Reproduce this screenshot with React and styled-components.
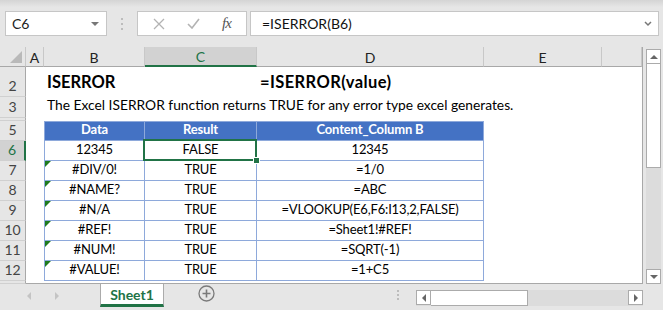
import React from "react";
import styled, { createGlobalStyle, css } from "styled-components";

const GlobalStyle = createGlobalStyle`
  html, body { margin: 0; padding: 0; background: #e6e6e6; }
  body { font-family: Lato, "Open Sans", sans-serif; }
`;

const Window = styled.div`
  width: 663px;
  height: 310px;
  overflow: hidden;
  background: linear-gradient(#d4d4d4 0, #e6e6e6 7px, #e6e6e6 100%);
  display: flex;
  flex-direction: column;
`;

const FormulaRow = styled.div`
  display: flex;
  height: 25px;
  margin-top: 11px;
  padding: 0 4px 0 5px;
`;

const NameBox = styled.div`
  width: 102px;
  box-sizing: border-box;
  background: #fff;
  border: 1px solid #c6c6c6;
  display: flex;
  align-items: center;
  justify-content: space-between;
  padding: 0 7px 0 6px;
  font-size: 14px;
  color: #222;
`;

const DownTri = styled.span`
  width: 0;
  height: 0;
  border-left: 4px solid transparent;
  border-right: 4px solid transparent;
  border-top: 4px solid #777;
`;

const Dots = styled.div`
  width: ${(p) => p.$w || 30}px;
  height: ${(p) => (p.$h ? `${p.$h}px` : "auto")};
  margin-left: ${(p) => p.$ml || 0}px;
  display: flex;
  flex-direction: column;
  align-items: center;
  justify-content: center;
  gap: ${(p) => p.$gap || 3}px;
  span {
    width: 2px;
    height: 2px;
    background: #bcbcbc;
  }
`;

const FxBox = styled.div`
  width: 110px;
  box-sizing: border-box;
  background: #fff;
  border: 1px solid #c6c6c6;
  display: flex;
  align-items: center;
  justify-content: space-around;
  padding: 0 4px;
`;

const Fx = styled.span`
  font-family: "Liberation Serif", serif;
  font-style: italic;
  font-size: 15px;
  color: #555;
  letter-spacing: -1px;
`;

const FormulaInput = styled.div`
  flex: 1;
  margin-left: 3px;
  box-sizing: border-box;
  background: #fff;
  border: 1px solid #c6c6c6;
  display: flex;
  align-items: center;
  justify-content: space-between;
  padding: 0 6px 0 11px;
  font-size: 14px;
  color: #111;
`;

const Body = styled.div`
  display: flex;
  margin-top: 11px;
  height: 237px;
`;

const Sheet = styled.div`
  display: grid;
  grid-template-columns: 26px 18px 101px 112px 227px 118px 40px;
  grid-template-rows: 20px 30px 21px 3px repeat(8, 20px) 2px;
  width: 643px;
  box-sizing: border-box;
  background: #fff;
  border-right: 1px solid #a8a8a8;
  border-bottom: 1px solid #a8a8a8;
  font-size: 13px;
  letter-spacing: -0.15px;
  color: #000;
`;

const Corner = styled.div`
  background: #e6e6e6;
  border-right: 1px solid #c8c8c8;
  border-bottom: 1px solid #a8a8a8;
  position: relative;
  &::after {
    content: "";
    position: absolute;
    right: 3px;
    bottom: 3px;
    border-left: 12px solid transparent;
    border-bottom: 12px solid #b9b9b9;
  }
`;

const ColHead = styled.div`
  background: ${(p) => (p.$active ? "#d2d2d2" : "#e6e6e6")};
  border-right: 1px solid #c8c8c8;
  border-bottom: ${(p) => (p.$active ? "2px solid #217346" : "1px solid #a8a8a8")};
  display: flex;
  align-items: center;
  justify-content: center;
  font-size: 14px;
  letter-spacing: 0;
  color: ${(p) => (p.$active ? "#217346" : "#222")};
  padding-top: 1px;
  box-sizing: border-box;
`;

const RowHead = styled.div`
  background: ${(p) => (p.$active ? "#d2d2d2" : "#e6e6e6")};
  border-right: ${(p) => (p.$active ? "2px solid #217346" : "1px solid #a8a8a8")};
  border-bottom: 1px solid #d0d0d0;
  display: flex;
  align-items: flex-end;
  justify-content: center;
  padding-bottom: 2px;
  box-sizing: border-box;
  font-size: 14px;
  letter-spacing: 0;
  color: ${(p) => (p.$active ? "#217346" : "#444")};
  overflow: hidden;
`;

const Cell = styled.div`
  display: flex;
  align-items: flex-end;
  justify-content: ${(p) => (p.$center ? "center" : "flex-start")};
  padding: 0 3px 2px 3px;
  box-sizing: border-box;
  white-space: nowrap;
  min-width: 0;
  position: relative;
  ${(p) =>
    p.$table &&
    css`
      border-right: 1px solid #8ea9db;
      border-bottom: 1px solid #8ea9db;
      padding-bottom: 3px;
    `}
  ${(p) =>
    p.$first &&
    css`
      border-left: 1px solid #8ea9db;
    `}
  ${(p) =>
    p.$head &&
    css`
      background: #4472c4;
      color: #fff;
      font-weight: 700;
      border-top: 1px solid #8ea9db;
    `}
  ${(p) =>
    p.$flag &&
    css`
      &::before {
        content: "";
        position: absolute;
        left: 0;
        top: 0;
        border-top: 6px solid #1e7a1e;
        border-right: 6px solid transparent;
      }
    `}
  ${(p) =>
    p.$selected &&
    css`
      &::after {
        content: "";
        position: absolute;
        left: -2px;
        top: -2px;
        right: -1px;
        bottom: -1px;
        border: 2px solid #217346;
      }
      &::before {
        content: "";
        position: absolute;
        right: -4px;
        bottom: -4px;
        width: 5px;
        height: 5px;
        background: #217346;
        border: 1px solid #fff;
        z-index: 2;
      }
    `}
`;

const Title = styled.span`
  font-size: 16.5px;
  font-weight: 700;
  letter-spacing: ${(p) => p.$ls || 0}px;
  padding-bottom: 3px;
`;

const Note = styled.span`
  font-size: 13.8px;
  letter-spacing: 0;
  padding-bottom: 3px;
`;

const VScroll = styled.div`
  width: 15px;
  margin: 2px 0 0 3px;
  display: flex;
  flex-direction: column;
  background: #dcdcdc;
`;

const ScrollBtn = styled.div`
  width: 15px;
  height: 15px;
  box-sizing: border-box;
  background: #fff;
  border: 1px solid #ababab;
  display: flex;
  align-items: center;
  justify-content: center;
  margin-top: ${(p) => (p.$end ? "auto" : "0")};
`;

const Arrow = styled.span`
  width: 0;
  height: 0;
  ${(p) =>
    p.$dir === "up" &&
    css`
      border-left: 4px solid transparent;
      border-right: 4px solid transparent;
      border-bottom: 4px solid #666;
    `}
  ${(p) =>
    p.$dir === "down" &&
    css`
      border-left: 4px solid transparent;
      border-right: 4px solid transparent;
      border-top: 4px solid #666;
    `}
  ${(p) =>
    p.$dir === "left" &&
    css`
      border-top: 4px solid transparent;
      border-bottom: 4px solid transparent;
      border-right: 4px solid ${p.$light ? "#c4c4c4" : "#666"};
    `}
  ${(p) =>
    p.$dir === "right" &&
    css`
      border-top: 4px solid transparent;
      border-bottom: 4px solid transparent;
      border-left: 4px solid ${p.$light ? "#c4c4c4" : "#666"};
    `}
`;

const VThumb = styled.div`
  height: 104px;
  box-sizing: border-box;
  background: #fff;
  border: 1px solid #ababab;
  border-top: none;
`;

const TabBar = styled.div`
  display: flex;
  height: 26px;
  align-items: flex-start;
`;

const TabNav = styled.div`
  width: 100px;
  height: 23px;
  display: flex;
  align-items: center;
  gap: 24px;
  padding-left: 27px;
  box-sizing: border-box;
`;

const Tab = styled.div`
  width: 64px;
  height: 23px;
  box-sizing: border-box;
  background: #fff;
  border-left: 1px solid #ababab;
  border-right: 1px solid #ababab;
  border-bottom: 3px solid #217346;
  display: flex;
  align-items: center;
  justify-content: center;
  font-weight: 700;
  font-size: 14px;
  color: #217346;
`;

const AddSheet = styled.div`
  width: 84px;
  height: 19px;
  display: flex;
  align-items: center;
  justify-content: center;
`;

const HScroll = styled.div`
  width: 227px;
  height: 16px;
  margin-top: 6px;
  display: flex;
  background: #dcdcdc;
`;

const HThumb = styled.div`
  width: 97px;
  box-sizing: border-box;
  background: #fff;
  border: 1px solid #ababab;
  border-left: none;
  margin-right: auto;
`;

const cols = ["A", "B", "C", "D", "E", ""];

const data = [
  ["12345", "FALSE", "12345"],
  ["#DIV/0!", "TRUE", "=1/0"],
  ["#NAME?", "TRUE", "=ABC"],
  ["#N/A", "TRUE", "=VLOOKUP(E6,F6:I13,2,FALSE)"],
  ["#REF!", "TRUE", "=Sheet1!#REF!"],
  ["#NUM!", "TRUE", "=SQRT(-1)"],
  ["#VALUE!", "TRUE", "=1+C5"],
];

export default function App() {
  return (
    <Window>
      <GlobalStyle />
      <FormulaRow>
        <NameBox>
          C6
          <DownTri />
        </NameBox>
        <Dots>
          <span />
          <span />
          <span />
        </Dots>
        <FxBox>
          <svg width="12" height="12" viewBox="0 0 12 12">
            <path d="M1 1 L11 11 M11 1 L1 11" stroke="#b3b3b3" strokeWidth="1.3" />
          </svg>
          <svg width="13" height="11" viewBox="0 0 13 11">
            <path d="M1 6 L5 10 L12 1" stroke="#b3b3b3" strokeWidth="1.6" fill="none" />
          </svg>
          <Fx>fx</Fx>
        </FxBox>
        <FormulaInput>
          =ISERROR(B6)
          <svg width="8" height="6" viewBox="0 0 8 6">
            <path d="M1 1 L4 4 L7 1" stroke="#777" strokeWidth="1.5" fill="none" />
          </svg>
        </FormulaInput>
      </FormulaRow>
      <Body>
        <Sheet>
          <Corner />
          {cols.map((c, i) => (
            <ColHead key={i} $active={c === "C"}>
              {c}
            </ColHead>
          ))}

          <RowHead>2</RowHead>
          <Cell />
          <Cell>
            <Title>ISERROR</Title>
          </Cell>
          <Cell />
          <Cell>
            <Title $ls={0.4}>=ISERROR(value)</Title>
          </Cell>
          <Cell />
          <Cell />

          <RowHead>3</RowHead>
          <Cell />
          <Cell>
            <Note>The Excel ISERROR function returns TRUE for any error type excel generates.</Note>
          </Cell>
          <Cell />
          <Cell />
          <Cell />
          <Cell />

          <RowHead />
          <Cell />
          <Cell />
          <Cell />
          <Cell />
          <Cell />
          <Cell />

          <RowHead>5</RowHead>
          <Cell />
          <Cell $table $first $head $center>Data</Cell>
          <Cell $table $head $center>Result</Cell>
          <Cell $table $head $center>Content_Column B</Cell>
          <Cell />
          <Cell />

          {data.map((r, i) => (
            <React.Fragment key={i}>
              <RowHead $active={i === 0}>{i + 6}</RowHead>
              <Cell />
              <Cell $table $first $center $flag={i > 0}>
                {r[0]}
              </Cell>
              <Cell $table $center $selected={i === 0}>
                {r[1]}
              </Cell>
              <Cell $table $center>
                {r[2]}
              </Cell>
              <Cell />
              <Cell />
            </React.Fragment>
          ))}

          <RowHead />
          <Cell />
          <Cell />
          <Cell />
          <Cell />
          <Cell />
          <Cell />
        </Sheet>
        <VScroll>
          <ScrollBtn>
            <Arrow $dir="up" />
          </ScrollBtn>
          <VThumb />
          <ScrollBtn $end>
            <Arrow $dir="down" />
          </ScrollBtn>
        </VScroll>
      </Body>
      <TabBar>
        <TabNav>
          <Arrow $dir="left" $light />
          <Arrow $dir="right" $light />
        </TabNav>
        <Tab>Sheet1</Tab>
        <AddSheet>
          <svg width="17" height="17" viewBox="0 0 17 17">
            <circle cx="8.5" cy="8.5" r="7.5" stroke="#7a7a7a" strokeWidth="1.3" fill="none" />
            <path d="M8.5 4.5 V12.5 M4.5 8.5 H12.5" stroke="#7a7a7a" strokeWidth="1.6" />
          </svg>
        </AddSheet>
        <Dots $w={36} $h={22} $ml={132} $gap={2}>
          <span />
          <span />
          <span />
        </Dots>
        <HScroll>
          <ScrollBtn>
            <Arrow $dir="left" />
          </ScrollBtn>
          <HThumb />
          <ScrollBtn>
            <Arrow $dir="right" />
          </ScrollBtn>
        </HScroll>
      </TabBar>
    </Window>
  );
}
